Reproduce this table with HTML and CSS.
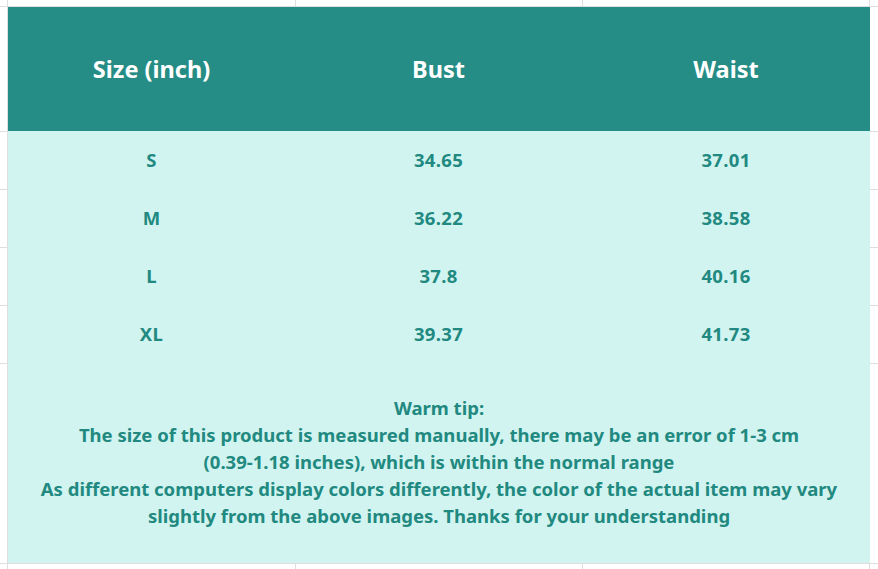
FILE: index.html
```html
<!DOCTYPE html>
<html lang="en">
<head>
<meta charset="utf-8">
<title>Size chart</title>
<link rel="stylesheet" href="styles.css">
</head>
<body>
<div class="chart">
  <div class="head">Size (inch)</div>
  <div class="head">Bust</div>
  <div class="head">Waist</div>

  <div class="cell">S</div><div class="cell">34.65</div><div class="cell">37.01</div>
  <div class="cell">M</div><div class="cell">36.22</div><div class="cell">38.58</div>
  <div class="cell">L</div><div class="cell">37.8</div><div class="cell">40.16</div>
  <div class="cell">XL</div><div class="cell">39.37</div><div class="cell">41.73</div>

  <div class="tip">
    Warm tip:<br>
    The size of this product is measured manually, there may be an error of 1-3 cm<br>
    (0.39-1.18 inches), which is within the normal range<br>
    As different computers display colors differently, the color of the actual item may vary<br>
    slightly from the above images. Thanks for your understanding
  </div>
</div>
</body>
</html>
```

FILE: styles.css
```css
html, body {
  margin: 0;
  padding: 0;
}

body {
  width: 878px;
  height: 569px;
  overflow: hidden;
  background-color: #ffffff;
  background-image:
    linear-gradient(#dedede, #dedede),
    linear-gradient(#dedede, #dedede),
    linear-gradient(#dedede, #dedede),
    linear-gradient(#dedede, #dedede),
    linear-gradient(#dedede, #dedede),
    linear-gradient(#dedede, #dedede),
    linear-gradient(#dedede, #dedede),
    linear-gradient(#dedede, #dedede),
    linear-gradient(#dedede, #dedede),
    linear-gradient(#dedede, #dedede),
    linear-gradient(#dedede, #dedede);
  background-repeat: no-repeat;
  background-size:
    1px 100%, 1px 100%, 1px 100%, 1px 100%,
    100% 1px, 100% 1px, 100% 1px, 100% 1px, 100% 1px, 100% 1px, 100% 1px;
  background-position:
    7px 0, 295px 0, 582px 0, 869px 0,
    0 6px, 0 131px, 0 189px, 0 247px, 0 305px, 0 363px, 0 563px;
  font-family: "Noto Sans", "Open Sans", sans-serif;
  font-weight: 700;
}

.chart {
  margin: 7px 0 0 8px;
  width: 862px;
  display: grid;
  grid-template-columns: 287px 287px 288px;
  grid-template-rows: 124px 58px 58px 58px 58px 200px;
  background: #d2f4f1;
  color: #21897f;
}

.head {
  background: #258d85;
  color: #ffffff;
  font-size: 23.5px;
  display: flex;
  align-items: center;
  justify-content: center;
}

.cell {
  font-size: 18.5px;
  letter-spacing: 0.3px;
  padding-bottom: 2px;
  display: flex;
  align-items: center;
  justify-content: center;
}

.tip {
  grid-column: 1 / 4;
  display: flex;
  align-items: center;
  justify-content: center;
  text-align: center;
  font-size: 18.5px;
  line-height: 27px;
  padding-bottom: 3px;
}
```
